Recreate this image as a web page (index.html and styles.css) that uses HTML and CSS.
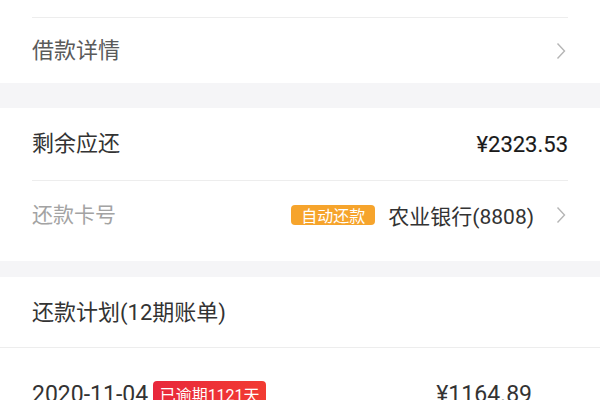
FILE: index.html
```html
<!DOCTYPE html>
<html lang="zh-CN">
<head>
<meta charset="utf-8">
<link rel="stylesheet" href="styles.css">
</head>
<body>
<div class="page">
  <section class="card">
    <div class="stub"></div>
    <div class="row row-detail">
      <span class="label label-mid">借款详情</span>
      <svg class="chev" viewBox="0 0 10 18"><path d="M1.5 1.5 L8.5 9 L1.5 16.5" /></svg>
    </div>
  </section>
  <section class="card">
    <div class="row row-remain">
      <span class="label label-dark">剩余应还</span>
      <span class="amount">¥2323.53</span>
    </div>
    <div class="row row-card">
      <span class="label label-light">还款卡号</span>
      <span class="right">
        <span class="badge badge-orange">自动还款</span>
        <span class="bank">农业银行(8808)</span>
        <svg class="chev" viewBox="0 0 10 18"><path d="M1.5 1.5 L8.5 9 L1.5 16.5" /></svg>
      </span>
    </div>
  </section>
  <section class="card card-plan">
    <div class="plan-head">
      <span class="label label-dark">还款计划(12期账单)</span>
    </div>
    <div class="row row-bill">
      <span class="left">
        <span class="date">2020-11-04</span>
        <span class="badge badge-red">已逾期1121天</span>
      </span>
      <span class="bill-amount">¥1164.89</span>
    </div>
  </section>
</div>
</body>
</html>
```
FILE: styles.css
```css
html, body {
  margin: 0;
  padding: 0;
  background: #f5f5f7;
}
body {
  font-family: Roboto, "Noto Sans CJK SC", "Noto Sans", sans-serif;
  width: 600px;
  height: 400px;
  overflow: hidden;
}
.page {
  display: flex;
  flex-direction: column;
}
.card {
  background: #ffffff;
}
.card + .card {
  margin-top: 25px;
}
.card-plan {
  margin-top: 16px !important;
}
.stub {
  height: 17px;
}
.row {
  margin: 0 32px;
  display: flex;
  align-items: center;
  justify-content: space-between;
}
.row-detail {
  height: 65px;
  border-top: 1px solid #ededed;
}
.row-remain {
  height: 72px;
}
.row-card {
  height: 81px;
  border-top: 1px solid #ededed;
  align-items: flex-start;
  padding-top: 19px;
  box-sizing: border-box;
}
.label {
  font-size: 22px;
  line-height: 30px;
}
.label-mid { color: #5a5a5a; }
.label-dark { color: #333333; }
.label-light { color: #a3a3a3; font-size: 21px; }
.amount {
  font-size: 22px;
  font-weight: 400;
  color: #1a1a1a;
  -webkit-text-stroke: 0.15px #1a1a1a;
}
.chev {
  width: 10px;
  height: 18px;
  margin-right: 2px;
}
.chev path {
  fill: none;
  stroke: #b5b5b5;
  stroke-width: 1.4;
}
.right {
  display: flex;
  align-items: center;
  height: 30px;
}
.badge {
  display: inline-flex;
  align-items: center;
  justify-content: center;
  color: #ffffff;
  font-size: 16px;
  height: 20px;
  border-radius: 4px;
  padding: 0 2px;
  box-sizing: border-box;
  white-space: nowrap;
}
.badge-orange {
  background: #f6a42c;
  width: 84px;
  margin-right: 13px;
}
.bank {
  font-size: 21px;
  color: #333333;
  margin-right: 22px;
}
.plan-head {
  height: 71px;
  padding: 0 32px;
  display: flex;
  align-items: center;
  padding-top: 2px;
  box-sizing: border-box;
  border-bottom: 1px solid #ededed;
}
.row-bill {
  height: 92px;
  margin-right: 68px;
}
.left {
  display: flex;
  align-items: center;
}
.date {
  font-size: 23px;
  color: #333333;
  margin-right: 5px;
  white-space: nowrap;
}
.badge-red {
  background: linear-gradient(90deg, #e8283c, #f23b32);
  width: 113px;
  height: 26px;
  font-size: 16px;
}
.bill-amount {
  font-size: 23px;
  color: #333333;
  white-space: nowrap;
}
```
